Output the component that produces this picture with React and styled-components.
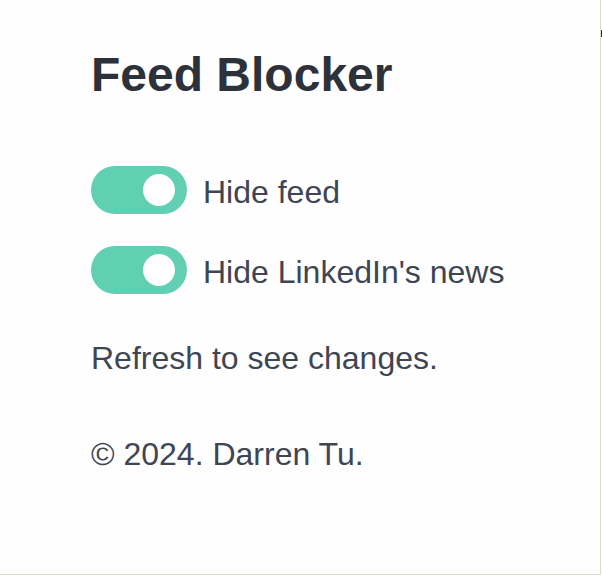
import React, { useState } from "react";
import styled, { createGlobalStyle } from "styled-components";

const GlobalStyle = createGlobalStyle`
  html, body {
    margin: 0;
    padding: 0;
    background: #ffffff;
  }
  body {
    font-family: "Liberation Sans", Arial, Helvetica, sans-serif;
  }
`;

const Frame = styled.div`
  position: relative;
  box-sizing: border-box;
  width: 601px;
  height: 575px;
  border-right: 1px solid #dcdcc8;
  border-bottom: 1px solid #dcdcc8;
  background: #fefefe;
  padding: 51px 0 0 91px;
`;

// small dark tick on the window edge
const EdgeMark = styled.span`
  position: absolute;
  top: 30px;
  right: -2px;
  width: 1px;
  height: 7px;
  background: #2a2a2a;
`;

const Title = styled.h1`
  margin: 0 0 67px;
  font-size: 48px;
  line-height: 48px;
  font-weight: 700;
  color: #2c313a;
`;

const Options = styled.div`
  display: flex;
  flex-direction: column;
  gap: 32px;
`;

const Row = styled.label`
  display: flex;
  align-items: center;
  gap: 16px;
  cursor: pointer;
`;

const Track = styled.span`
  position: relative;
  flex-shrink: 0;
  width: 96px;
  height: 48px;
  border-radius: 24px;
  background: ${(p) => (p.$on ? "#61cfb2" : "#c9cdd3")};
  transition: background 0.2s ease;
`;

const Knob = styled.span`
  position: absolute;
  top: 8px;
  left: ${(p) => (p.$on ? "52px" : "8px")};
  width: 32px;
  height: 32px;
  border-radius: 50%;
  background: #ffffff;
  transition: left 0.2s ease;
`;

const Label = styled.span`
  padding-top: 4px;
  font-size: 32px;
  line-height: 32px;
  color: #3e4553;
`;

const Note = styled.p`
  margin: ${(p) => p.$top}px 0 0;
  font-size: 32px;
  line-height: 32px;
  color: #3e4553;
`;

const Toggle = ({ label, on, onToggle }) => (
  <Row onClick={onToggle}>
    <Track $on={on}>
      <Knob $on={on} />
    </Track>
    <Label>{label}</Label>
  </Row>
);

const App = () => {
  const [hideFeed, setHideFeed] = useState(true);
  const [hideNews, setHideNews] = useState(true);

  return (
    <>
      <GlobalStyle />
      <Frame>
        <EdgeMark />
        <Title>Feed Blocker</Title>
        <Options>
          <Toggle label="Hide feed" on={hideFeed} onToggle={() => setHideFeed(!hideFeed)} />
          <Toggle label="Hide LinkedIn's news" on={hideNews} onToggle={() => setHideNews(!hideNews)} />
        </Options>
        <Note $top={48}>Refresh to see changes.</Note>
        <Note $top={64}>© 2024. Darren Tu.</Note>
      </Frame>
    </>
  );
};

export default App;
